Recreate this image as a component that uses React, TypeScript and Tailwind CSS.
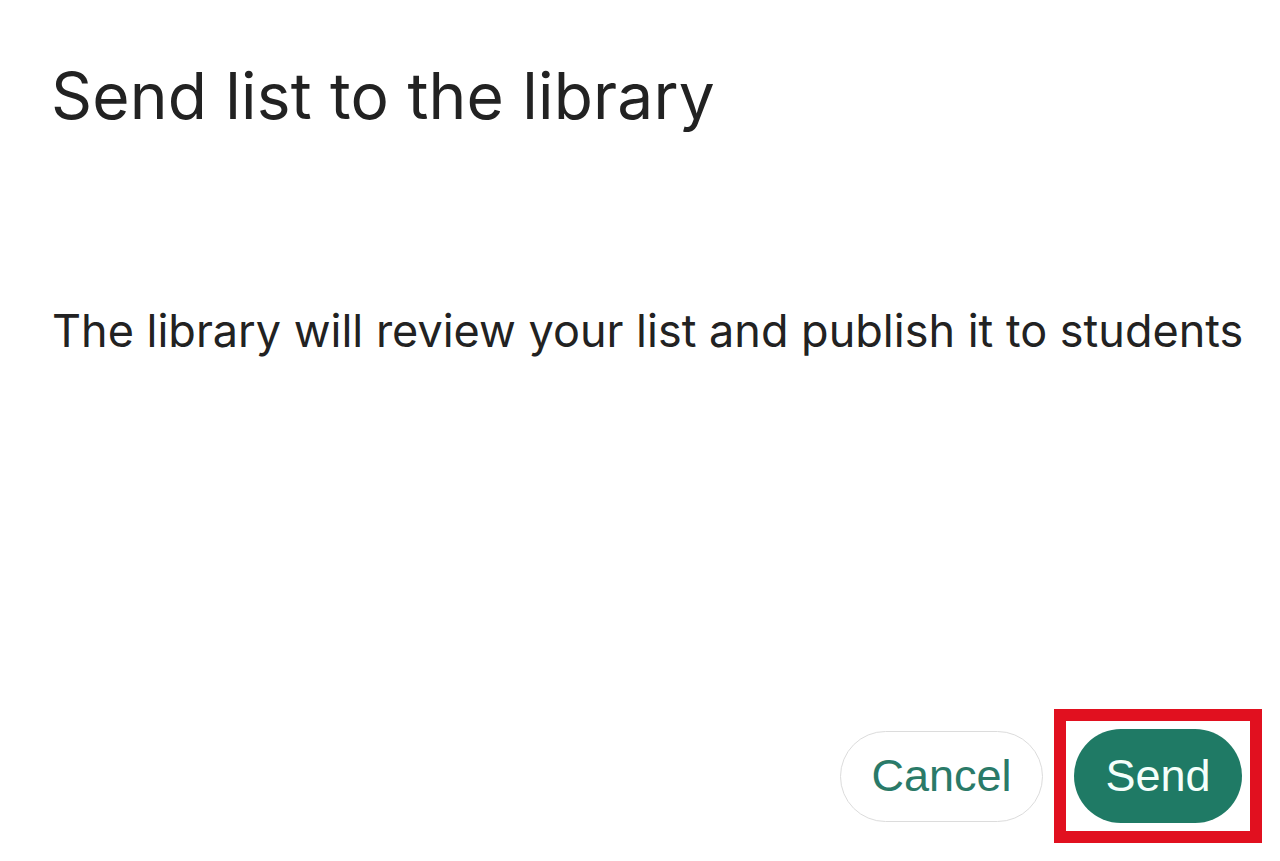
import React from "react";

export default function App() {
  return (
    <div className="w-[1280px] h-[861px] bg-white flex flex-col overflow-hidden" style={{ fontFamily: "Inter, 'Liberation Sans', sans-serif" }}>
      <h1 className="mt-[58px] ml-[51px] text-[64px] leading-[76px] text-[#222222] font-normal tracking-[0.2px]">
        Send list to the library
      </h1>
      <p className="mt-[170px] ml-[52px] text-[45px] leading-[54px] text-[#222222]">
        The library will review your list and publish it to students
      </p>
      <div className="mt-auto flex justify-end items-center gap-[11px] pr-[18px] pb-[18px]">
        <button className="w-[203px] h-[91px] rounded-full border border-[#dcdcdc] bg-white text-[#2a7a68] text-[45px] flex items-center justify-center" style={{ fontFamily: "'Liberation Sans', Arial, sans-serif" }}>
          Cancel
        </button>
        <div className="border-[12px] border-[#e1101f] p-[8px]">
          <button className="w-[168px] h-[94px] rounded-full bg-[#1f7a65] text-[#f4fffb] text-[45px] flex items-center justify-center" style={{ fontFamily: "'Liberation Sans', Arial, sans-serif" }}>
            Send
          </button>
        </div>
      </div>
    </div>
  );
}
